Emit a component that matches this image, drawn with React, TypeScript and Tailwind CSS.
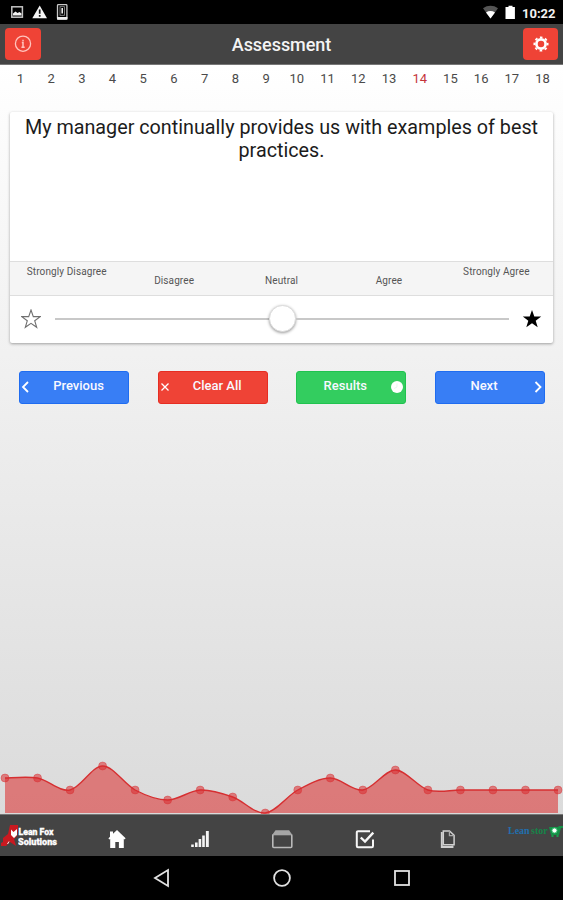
import type { ReactNode } from "react";

const QUESTION_COUNT = 18;
const CURRENT_QUESTION = 14;

const CHART_LEFT = 5;
const CHART_STEP = 32.53;
const CHART_BASE = 53;
const SCORES = [18, 18, 30, 6, 30, 40, 30, 37, 53, 30, 18, 30, 10, 30, 30, 30, 30, 30];

const points = SCORES.map((y, i) => ({ x: CHART_LEFT + i * CHART_STEP, y }));

// Smooth line through every point
function splinePath() {
  let d = `M${points[0].x} ${points[0].y}`;
  for (let i = 0; i < points.length - 1; i++) {
    const before = points[Math.max(i - 1, 0)];
    const from = points[i];
    const to = points[i + 1];
    const after = points[Math.min(i + 2, points.length - 1)];
    const k = 0.165;
    d += ` C${from.x + (to.x - before.x) * k} ${from.y + (to.y - before.y) * k}`;
    d += ` ${to.x - (after.x - from.x) * k} ${to.y - (after.y - from.y) * k} ${to.x} ${to.y}`;
  }
  return d;
}

function StatusBar() {
  return (
    <div className="flex h-6 shrink-0 items-center bg-black text-white">
      <svg width="70" height="24" viewBox="0 0 70 24" fill="none">
        <rect x="11.8" y="6.8" width="10.6" height="10.4" stroke="#c4c4c4" strokeWidth="1.5" />
        <path d="M13 15.5v-2l2.5-2 2 1.5 2-1 2 1.5v2z" fill="#f2f2f2" />
        <path d="M39.7 5.5 47 18.2H32.3z" fill="#f5f5f5" />
        <path d="M39.7 9.5v4.3M39.7 15v1.8" stroke="#111" strokeWidth="1.7" />
        <rect x="57.5" y="4.6" width="9.4" height="14.4" rx="0.8" stroke="#c8c8c8" strokeWidth="1.3" />
        <path d="M57 17h10.4v2.6H57z" fill="#eee" />
        <rect x="60" y="6.7" width="4.5" height="8.6" stroke="#999" strokeWidth="0.8" />
        <path d="M62.2 8v5.5" stroke="#eee" strokeWidth="1.6" />
      </svg>
      <div className="ml-auto flex items-center pr-[7px]">
        <svg width="40" height="24" viewBox="0 0 40 24">
          <path d="M1 8.2C5.5 4.9 11.5 4.9 16 8.2L8.5 18.5z" fill="#555" />
          <path d="M4 12.4c2.7-1.8 6.3-1.8 9 0l-4.5 6.1z" fill="#fff" />
          <path d="M23.5 7h3V5.8h4V7h2.4v12h-9.4z" fill="#fff" />
        </svg>
        <span className="mt-[2px] w-[34px] whitespace-nowrap text-[13px] leading-none font-bold text-[#f1f1f1]">10:22</span>
      </div>
    </div>
  );
}

function TitleBar() {
  return (
    <header className="flex h-[41px] shrink-0 items-center justify-between border-b border-[#777] bg-[#444] px-[5px]">
      <button className="flex h-8 w-9 items-center justify-center rounded-[4px] bg-[#ef4336]">
        <svg width="18" height="18" viewBox="0 0 18 18" fill="none" stroke="#ffc4bd">
          <circle cx="9" cy="8.7" r="7.6" strokeWidth="1.3" />
          <path d="M9 4.7v1.6M7.8 7.5H9v5M7.4 12.3h3.3" strokeWidth="1.5" />
        </svg>
      </button>
      <h1 className="mr-[1px] text-[18px] font-medium tracking-[-0.05px] text-[#f4f4f4]">Assessment</h1>
      <button className="flex h-8 w-[35px] items-center justify-center rounded-[4px] bg-[#ef4336]">
        <svg width="16" height="16" viewBox="0 0 16 16" fill="none" stroke="#fff">
          <circle cx="8" cy="8" r="4.6" strokeWidth="2.7" />
          <circle cx="8" cy="8" r="6.7" strokeWidth="1.7" strokeDasharray="2.63 2.63" strokeDashoffset="1.3" />
        </svg>
      </button>
    </header>
  );
}

function QuestionNumbers() {
  return (
    <div className="flex px-[5px] pt-[6px]">
      {Array.from({ length: QUESTION_COUNT }, (_, i) => i + 1).map((n) => (
        <span
          key={n}
          className={`flex-1 text-center text-[13px] leading-4 ${n === CURRENT_QUESTION ? "text-[#c4343a]" : "text-[#4a4a4a]"}`}
        >
          {n}
        </span>
      ))}
    </div>
  );
}

const STAR = "M10 1 12.3 7.6H19.2L13.7 11.7 15.7 18.3 10 14.3 4.3 18.3 6.3 11.7.8 7.6H7.7z";

function QuestionCard() {
  return (
    <div className="mx-[10px] mt-[25px] h-[231px] rounded-[2px] bg-white shadow-[0_1px_3px_rgba(0,0,0,0.35)]">
      <p className="h-[149px] pt-[4px] text-center text-[19.75px] leading-[23px] text-[#1c1c1c]">
        My manager continually provides us with examples of best practices.
      </p>
      <div className="flex h-[35px] border-y border-[#dedede] bg-[#f5f5f5] px-[3px] text-center text-[10px] leading-3 tracking-[0.1px] text-[#555]">
        <span className="flex-1 pt-[4px]">Strongly Disagree</span>
        <span className="flex-1 pt-[13px]">Disagree</span>
        <span className="flex-1 pt-[13px]">Neutral</span>
        <span className="flex-1 pt-[13px]">Agree</span>
        <span className="flex-1 pt-[4px]">Strongly Agree</span>
      </div>
      <div className="flex h-[45px] items-center px-[11px]">
        <svg width="20" height="20" viewBox="0 0 20 20">
          <path d={STAR} fill="none" stroke="#707070" strokeWidth="1.1" />
        </svg>
        <div className="ml-[14px] mr-[13px] flex h-7 flex-1 items-center">
          <div className="h-[2px] flex-1 bg-[#c8c8c8]" />
          <div className="h-[27px] w-[27px] rounded-full border border-[#dcdcdc] bg-white shadow-[0_1px_3px_rgba(0,0,0,0.4)]" />
          <div className="h-[2px] flex-1 bg-[#c8c8c8]" />
        </div>
        <svg width="20" height="20" viewBox="0 0 20 20">
          <path d={STAR} fill="#000" />
        </svg>
      </div>
    </div>
  );
}

interface ActionButtonProps {
  label: string;
  color: string;
  iconRight?: boolean;
  children: ReactNode;
}

function ActionButton({ label, color, iconRight, children }: ActionButtonProps) {
  return (
    <button className={`flex h-[33px] w-[110px] items-center rounded-[3px] border text-[13px] font-medium text-[#f8f8ff] ${color} ${iconRight ? "flex-row-reverse" : ""}`}>
      <span className="w-3 shrink-0 pb-[2px]">
        <svg width="12" height="14" viewBox="0 0 12 14" fill="none" stroke="#fff" className="block overflow-visible">
          {children}
        </svg>
      </span>
      <span className={`flex-1 pb-[3px] text-center ${iconRight ? "" : "pr-[3px]"}`}>{label}</span>
    </button>
  );
}

function Actions() {
  return (
    <div className="mt-[28px] flex justify-between pr-[18px] pl-[19px]">
      <ActionButton label="Previous" color="bg-[#387ef5] border-[#1f6cf0]">
        <path d="M8 2 3 7l5 5" strokeWidth="1.8" />
      </ActionButton>
      <ActionButton label="Clear All" color="bg-[#ef4336] border-[#e62d22]">
        <path d="m2.5 3.5 7 7m0-7-7 7" strokeWidth="1.3" />
      </ActionButton>
      <ActionButton label="Results" color="bg-[#33cd5f] border-[#20c34f]" iconRight>
        <circle cx="4" cy="7" r="6" fill="#fff" stroke="none" />
        <path d="M4 7V3.4M4 7 1.2 8.5" stroke="#ddf5e4" strokeWidth="0.7" />
      </ActionButton>
      <ActionButton label="Next" color="bg-[#387ef5] border-[#1f6cf0]" iconRight>
        <path d="m3.5 2 5 5-5 5" strokeWidth="1.8" />
      </ActionButton>
    </div>
  );
}

function ScoreChart() {
  const line = splinePath();
  const last = points[points.length - 1];
  return (
    <svg width="563" height="54" viewBox="0 0 563 54" className="mt-auto block shrink-0">
      <path d={`${line} L${last.x} ${CHART_BASE} L${CHART_LEFT} ${CHART_BASE} Z`} fill="#dc3030" fillOpacity="0.57" />
      <path d={line} fill="none" stroke="#d62f31" strokeWidth="1.4" />
      {points.map((p) => (
        <circle key={p.x} cx={p.x} cy={p.y} r="4" fill="#d92c2f" fillOpacity="0.55" stroke="#d92c2f" strokeOpacity="0.4" />
      ))}
    </svg>
  );
}

function Tab({ children }: { children: ReactNode }) {
  return (
    <button className="flex flex-1 justify-center">
      <svg width="24" height="20" viewBox="0 0 24 20" fill="none">
        {children}
      </svg>
    </button>
  );
}

function TabBar() {
  return (
    <footer className="flex h-[42px] shrink-0 items-center border-t border-[#777] bg-[#444]">
      <div className="flex w-[76px] items-center">
        <svg width="18" height="24" viewBox="0 0 18 24" className="shrink-0">
          <path d="M10 1h8v5l-1 6-3 3 2 7-6-4-4 4H1v-3l2-1v-4l5-4z" fill="#c91920" />
          <path d="M11 5.5 13.5 8 17 5v6l-3 3-3-3z" fill="#fff" />
          <path d="M9 17.5 7.5 20" stroke="#eee" />
        </svg>
        <svg width="41" height="24" viewBox="0 0 41 24" fill="#fff" fontFamily="Roboto, sans-serif" fontSize="9.5" fontWeight="900">
          <text x="0.5" y="10.5" textLength="35" lengthAdjust="spacingAndGlyphs" stroke="#fff" strokeWidth="0.3">Lean Fox</text>
          <text x="0" y="20.5" textLength="39" lengthAdjust="spacingAndGlyphs" stroke="#fff" strokeWidth="0.3">Solutions</text>
        </svg>
      </div>
      <div className="flex w-[413px] pt-[7px]">
        <Tab>
          <path d="M12 1 20.6 9.3l-1 1.2-.8-.7V19h-4.9v-6h-3.6v6H5.2V9.9l-.8.7-1-1.2L5 7.7V2.5h3v2.3z" fill="#fff" />
        </Tab>
        <Tab>
          <path d="M3.2 15.5h2.6V18H3.2zM7 13.5h2.6V18H7zM10.6 10h2.6v8h-2.6zM14.2 6.5h2.6V18h-2.6zM17.9 2h2.9v16h-2.9z" fill="#f5f5f5" />
        </Tab>
        <Tab>
          <rect x="2.8" y="5.5" width="19" height="13" rx="1" stroke="#b9b9b9" strokeWidth="1.6" />
          <path d="M5.5 1.2h13.6L22.4 6H2.2z" fill="#a6a6a6" />
        </Tab>
        <Tab>
          <path d="M17 2.2H5A1.2 1.2 0 0 0 3.8 3.4V17A1.2 1.2 0 0 0 5 18.2h13.8A1.2 1.2 0 0 0 20 17v-6.5" stroke="#f7f7f7" strokeWidth="2" />
          <path d="m7.8 8.5 4.2 4L20.3 3.6" stroke="#f7f7f7" strokeWidth="2.4" />
        </Tab>
        <Tab>
          <path d="M7.3 1.9h6.2l4.6 4.4v9.4H7.3z" stroke="#d0d0d0" strokeWidth="1.5" />
          <path d="M13.4 2v4.6h4.6" stroke="#aaa" strokeWidth="1.2" />
          <path d="M5.8 3V18H16.5V16.5" stroke="#d0d0d0" strokeWidth="1.9" />
        </Tab>
      </div>
      <div className="mb-[9px] ml-auto flex w-[55px] shrink-0 items-center font-['Liberation_Serif',serif] text-[10px] leading-3 font-bold">
        <span className="w-[23px] text-[#216fae]">Lean</span>
        <span className="w-[18px] text-[#168449]">stor</span>
        <svg width="14" height="14" viewBox="0 0 14 14" className="shrink-0">
          <path d="M0 3h9l1-1h4v2h-2l-2 7H2z" fill="#159147" />
          <circle cx="5.5" cy="6.5" r="2.6" fill="#fff" stroke="#35bd6d" />
          <path d="M2.5 12h2M7.5 12h2" stroke="#17a14b" strokeWidth="2" />
        </svg>
      </div>
    </footer>
  );
}

function SystemNav() {
  return (
    <nav className="flex h-11 shrink-0 justify-center gap-[100px] bg-black pt-[12px]">
      <svg width="20" height="20" viewBox="0 0 20 20" fill="none" stroke="#e2e2e2" strokeWidth="1.8">
        <path d="M16 2v16L3 10z" />
      </svg>
      <svg width="20" height="20" viewBox="0 0 20 20" fill="none" stroke="#e2e2e2" strokeWidth="1.8">
        <circle cx="10" cy="10" r="7.9" />
      </svg>
      <svg width="20" height="20" viewBox="0 0 20 20" fill="none" stroke="#e2e2e2" strokeWidth="1.8">
        <rect x="3" y="3" width="14" height="14" />
      </svg>
    </nav>
  );
}

export default function App() {
  return (
    <div className="flex h-[900px] w-[563px] flex-col overflow-hidden font-[Roboto,sans-serif]">
      <StatusBar />
      <TitleBar />
      <main className="flex min-h-0 flex-1 flex-col bg-linear-to-b from-white to-[#dbdbdb]">
        <QuestionNumbers />
        <QuestionCard />
        <Actions />
        <ScoreChart />
      </main>
      <TabBar />
      <SystemNav />
    </div>
  );
}
